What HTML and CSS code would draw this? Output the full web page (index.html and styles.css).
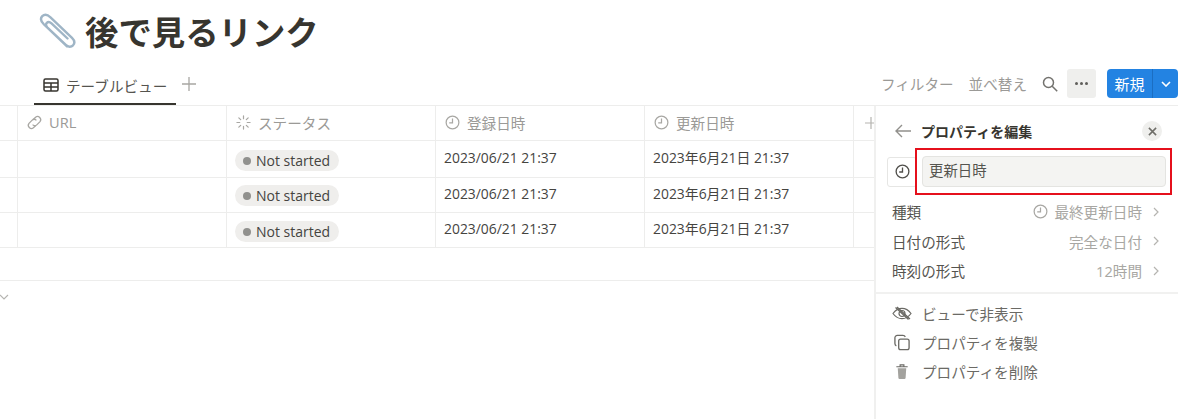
FILE: index.html
```html
<!DOCTYPE html>
<html lang="ja">
<head>
<meta charset="utf-8">
<title>後で見るリンク</title>
<link rel="stylesheet" href="styles.css">
</head>
<body>
<div class="page">
  <header class="title-bar">
    <svg class="clip" viewBox="0 0 38 36" fill="none" stroke="#9fb5c6" stroke-width="2.4" stroke-linecap="round" stroke-linejoin="round"><path d="M29 33.5 6 11.5C2.6 8.2 2.4 5.2 4.3 3.2 6.300 1.200 9.500 1.500 12.500 4.300L34 24.800C36.700 27.400 36.800 30.300 35 32.300 33.100 34.300 30.200 34.200 27.800 31.900L9.500 14.500C7.800 12.800 7.600 11 8.800 9.800 10 8.600 11.800 8.800 13.500 10.400L29.500 25.500"/></svg>
    <h1 class="title">後で見るリンク</h1>
  </header>
  <div class="toolbar">
    <div class="tabs">
      <div class="tab">
        <svg class="ico16" viewBox="0 0 16 16" fill="none" stroke="#37352f" stroke-width="1.500"><rect x="1" y="2" width="14" height="12" rx="1.500"/><path d="M1 6h14M1 10h14M8 6v8"/></svg>
        <span>テーブルビュー</span>
      </div>
      <svg class="tab-plus" viewBox="0 0 14 14" stroke="#a8a7a3" stroke-width="1.300"><path d="M7 0v14M0 7h14"/></svg>
    </div>
    <div class="actions">
      <span class="act first">フィルター</span>
      <span class="act">並べ替え</span>
      <svg class="search" viewBox="0 0 16 16" fill="none" stroke="#73726e" stroke-width="1.500"><circle cx="6.500" cy="6.500" r="5"/><path d="m10.200 10.200 5 5"/></svg>
      <div class="more"><i></i><i></i><i></i></div>
      <div class="new">
        <span class="new-label">新規</span>
        <span class="new-drop"><svg viewBox="0 0 10 6" fill="none" stroke="#fff" stroke-width="1.600"><path d="m1 1 4 4 4-4"/></svg></span>
      </div>
    </div>
  </div>
  <div class="body">
    <main class="main">
      <div class="grid head">
        <div class="c"></div>
        <div class="c hcell url-h"><svg class="ico17" viewBox="0 0 16 16" fill="none" stroke="#a8a7a3" stroke-width="1.200"><path d="M6.800 5.200 9 3a3 3 0 0 1 4.200 4.200l-2.800 2.800a3 3 0 0 1-4.200 0"/><path d="M9.200 10.800 7 13a3 3 0 0 1-4.200-4.200L5.600 6a3 3 0 0 1 4.200 0"/></svg><span>URL</span></div>
        <div class="c hcell"><svg class="ico15" viewBox="0 0 16 16" fill="none" stroke="#a8a7a3" stroke-width="1.300" stroke-linecap="round"><path d="M8 1v3M8 12v3M1 8h3M12 8h3M3 3l2 2M11 11l2 2M13 3l-2 2M5 11l-2 2"/></svg><span>ステータス</span></div>
        <div class="c hcell"><svg class="ico15" viewBox="0 0 16 16" fill="none" stroke="#a8a7a3" stroke-width="1.300"><circle cx="8" cy="8" r="6.800"/><path d="M8 3.800V8.500H4.500"/></svg><span>登録日時</span></div>
        <div class="c hcell"><svg class="ico15" viewBox="0 0 16 16" fill="none" stroke="#a8a7a3" stroke-width="1.300"><circle cx="8" cy="8" r="6.800"/><path d="M8 3.800V8.500H4.500"/></svg><span>更新日時</span></div>
        <div class="c hplus"><svg viewBox="0 0 12 12" stroke="#b5b4b0" stroke-width="1.200"><path d="M6 0v12M0 6h12"/></svg></div>
      </div>
      <div class="grid row tall">
        <div class="c"></div><div class="c"></div>
        <div class="c status"><span class="pill"><i class="dot"></i>Not started</span></div>
        <div class="c date">2023/06/21 21:37</div>
        <div class="c date">2023年6月21日 21:37</div>
        <div class="c"></div>
      </div>
      <div class="grid row mid">
        <div class="c"></div><div class="c"></div>
        <div class="c status"><span class="pill"><i class="dot"></i>Not started</span></div>
        <div class="c date">2023/06/21 21:37</div>
        <div class="c date">2023年6月21日 21:37</div>
        <div class="c"></div>
      </div>
      <div class="grid row">
        <div class="c"></div><div class="c"></div>
        <div class="c status"><span class="pill"><i class="dot"></i>Not started</span></div>
        <div class="c date">2023/06/21 21:37</div>
        <div class="c date">2023年6月21日 21:37</div>
        <div class="c"></div>
      </div>
      <div class="calc"></div>
      <svg class="group-chevron" viewBox="0 0 10 6" fill="none" stroke="#b5b4b0" stroke-width="1.100"><path d="m1 1 4 4 4-4"/></svg>
    </main>
    <aside class="panel">
      <div class="p-head">
        <svg class="back" viewBox="0 0 16 14" fill="none" stroke="#91908c" stroke-width="1.400"><path d="M16 7H1M7 1 1 7l6 6"/></svg>
        <strong class="p-title">プロパティを編集</strong>
        <span class="close"><svg viewBox="0 0 10 10" stroke="#6f6e69" stroke-width="1.700"><path d="m1 1 8 8M9 1 1 9"/></svg></span>
      </div>
      <div class="name-row">
        <span class="icon-btn"><svg class="ico15" viewBox="0 0 16 16" fill="none" stroke="#4f4e4a" stroke-width="1.400"><circle cx="8" cy="8" r="6.800"/><path d="M8 3.800V8.500H4.500"/></svg></span>
        <div class="highlight"><div class="name-input">更新日時</div></div>
      </div>
      <div class="opts">
        <div class="opt"><span>種類</span><span class="val"><svg class="ico15" viewBox="0 0 16 16" fill="none" stroke="#a8a7a3" stroke-width="1.300"><circle cx="8" cy="8" r="6.800"/><path d="M8 3.800V8.500H4.500"/></svg>最終更新日時<svg class="chev" viewBox="0 0 6 10" fill="none" stroke="#b5b4b0" stroke-width="1.200"><path d="m1 1 4 4-4 4"/></svg></span></div>
        <div class="opt"><span>日付の形式</span><span class="val">完全な日付<svg class="chev" viewBox="0 0 6 10" fill="none" stroke="#b5b4b0" stroke-width="1.200"><path d="m1 1 4 4-4 4"/></svg></span></div>
        <div class="opt"><span>時刻の形式</span><span class="val">12時間<svg class="chev" viewBox="0 0 6 10" fill="none" stroke="#b5b4b0" stroke-width="1.200"><path d="m1 1 4 4-4 4"/></svg></span></div>
      </div>
      <div class="cmds">
        <div class="cmd"><svg class="cmd-ico" viewBox="0 0 20 16" fill="none" stroke="#6b6a65" stroke-width="1.200"><path d="M1 8c2.500-3.500 5.500-5.200 9-5.200S16.500 4.500 19 8c-2.500 3.500-5.500 5.200-9 5.200S3.500 11.500 1 8Z"/><circle cx="10" cy="8" r="3"/><path d="M3.500 2l13 12M5 1.500l13 12"/></svg><span>ビューで非表示</span></div>
        <div class="cmd"><svg class="cmd-ico" viewBox="0 0 18 18" fill="none" stroke="#6b6a65" stroke-width="1.400"><rect x="5.500" y="5.500" width="11" height="11" rx="2"/><path d="M3 12.500C2 12 1.500 11 1.500 10V4a2.500 2.500 0 0 1 2.500-2.500h6c1 0 2 .5 2.500 1.500"/></svg><span>プロパティを複製</span></div>
        <div class="cmd"><svg class="cmd-ico" viewBox="0 0 18 18"><path d="M4.500 5.500h9l-.7 10.500a1.200 1.200 0 0 1-1.200 1H6.400a1.200 1.200 0 0 1-1.200-1Z" fill="#a3a29e"/><path d="M3 4h12M7 4V2h4v2" fill="none" stroke="#6b6a65" stroke-width="1.200"/></svg><span>プロパティを削除</span></div>
      </div>
    </aside>
  </div>
</div>
</body>
</html>
```
FILE: styles.css
```css
* { box-sizing: border-box; }
html, body { margin: 0; height: 100%; background: #fff; overflow: hidden; }
body {
  font-family: "Open Sans", "Noto Sans CJK JP", sans-serif;
  font-size: 14.6px;
  color: #37352f;
}
svg { display: block; flex: none; }
.page { width: 1178px; height: 419px; display: flex; flex-direction: column; }

.title-bar { height: 64px; padding: 13px 0 0 38px; display: flex; align-items: flex-start; gap: 9px; }
.clip { width: 38px; height: 36px; }
.title { margin: -4px 0 0; font-size: 33.400px; line-height: 44px; font-weight: 700; font-family: "Noto Sans CJK JP", sans-serif; }

.toolbar { height: 42px; display: flex; justify-content: space-between; border-bottom: 1px solid #ededec; }
.tabs { display: flex; align-items: flex-start; padding-left: 34px; }
.tab { width: 142px; height: 41px; padding: 3px 0 0 9px; display: flex; align-items: center; gap: 7px; border-bottom: 2px solid #37352f; font-size: 14.600px; color: #55544f; }
.ico16 { width: 16px; height: 16px; }
.tab-plus { width: 14px; height: 14px; margin: 13px 0 0 6px; }
.actions { display: flex; align-items: flex-start; padding-top: 5px; color: #9b9a97; }
.act { line-height: 31px; margin-right: 15px; }
.search { width: 16px; height: 16px; margin: 7px 9px 0 0; }
.more { width: 29px; height: 29px; background: #efefed; border-radius: 3px; margin-right: 11px; display: flex; align-items: center; justify-content: center; gap: 2px; }
.more i { width: 3px; height: 3px; border-radius: 50%; background: #5f5e5a; }
.new { width: 71px; height: 29px; background: #2383e2; border-radius: 4px; display: flex; color: #fff; }
.new-label { width: 46px; line-height: 30px; text-align: center; font-size: 15px; border-right: 1px solid #1b6ec2; }
.new-drop { flex: 1; display: flex; align-items: center; justify-content: center; }
.new-drop svg { width: 10px; height: 6px; }

.body { flex: 1; display: flex; min-height: 0; }
.main { width: 874px; flex: none; }
.grid { display: grid; grid-template-columns: 18px 209px 209px 209px 209px 20px; border-bottom: 1px solid #ededec; }
.c { border-right: 1px solid #ededec; min-width: 0; }
.c:last-child { border-right: 0; }
.head { height: 35px; }
.hcell { display: flex; align-items: center; gap: 7px; padding: 0 0 2px 9px; color: #9b9a97; }
.url-h { gap: 6px; padding-left: 8px; }
.ico15 { width: 15px; height: 15px; }
.ico17 { width: 17px; height: 17px; }
.hplus { display: flex; align-items: center; overflow: hidden; }
.hplus svg { width: 12px; height: 12px; margin-left: 11px; }
.row { height: 35px; }
.row.tall { height: 37px; }
.date { padding-left: 8px; line-height: 32px; font-size: 13.900px; color: #45443f; white-space: nowrap; }
.tall .date { line-height: 34px; }
.status { padding: 7px 0 0 8px; }
.tall .status { padding-top: 8px; }
.mid .status { padding-top: 6px; }
.pill { display: inline-flex; align-items: center; height: 21px; padding: 0 9px 1px 8px; border-radius: 11px; background: #efeeec; color: #45443f; font-size: 14px; }
.dot { width: 8px; height: 8px; border-radius: 50%; background: #91918e; margin-right: 5px; margin-top: 2px; }
.calc { height: 33px; border-bottom: 1px solid #ededec; }
.group-chevron { width: 10px; height: 6px; margin: 13px 0 0 -1px; }

.panel { flex: 1; border-left: 2px solid #f0f0ef; }
.p-head { height: 42px; padding: 8px 16px 0 19px; display: flex; align-items: center; }
.back { width: 16px; height: 14px; }
.p-title { margin-left: 10px; font-family: "Noto Sans CJK JP", sans-serif; font-size: 14px; font-weight: 700; flex: 1; }
.close { width: 20px; height: 20px; border-radius: 50%; background: #efefed; display: flex; align-items: center; justify-content: center; }
.close svg { width: 9px; height: 9px; }
.name-row { display: flex; align-items: center; padding-left: 11px; height: 47px; }
.icon-btn { width: 30px; height: 30px; margin-right: -2px; border: 1px solid #e6e6e4; border-radius: 3px; display: flex; align-items: center; padding-left: 7px; }
.highlight { width: 257px; height: 47px; border: 2px solid #e5101c; padding: 6px 4px 6px 5px; position: relative; background: #fff; }
.name-input { height: 31px; background: #f4f4f2; border: 1px solid #e4e4e1; border-radius: 4px; padding-left: 6px; line-height: 28px; font-size: 14.400px; color: #55544f; }
.opts { padding-top: 2px; padding-bottom: 6px; border-bottom: 2px solid #f1f1f0; }
.opt { height: 29.500px; padding: 0 19px 0 16px; display: flex; justify-content: space-between; align-items: center; color: #55544f; }
.val { display: flex; align-items: center; gap: 4px; color: #a8a7a3; }
.val .ico15 { margin-right: 2px; }
.chev { width: 6px; height: 10px; margin-left: 7px; }
.cmds { padding-top: 5px; }
.cmd { height: 29.300px; padding-left: 16px; display: flex; align-items: center; gap: 10px; color: #6b6a65; }
.cmd-ico { width: 20px; height: 17px; }
```
